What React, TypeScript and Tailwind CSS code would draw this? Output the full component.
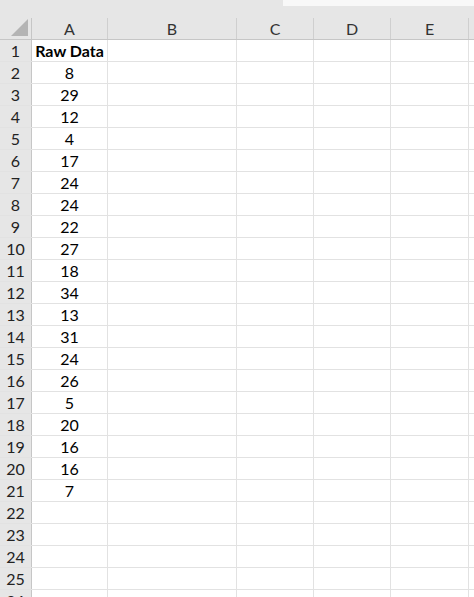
const cols = [
  { name: 'A', w: 'w-[76px]' },
  { name: 'B', w: 'w-[129px]' },
  { name: 'C', w: 'w-[77px]' },
  { name: 'D', w: 'w-[77px]' },
  { name: 'E', w: 'w-[78px]' },
];

const rawData = [8, 29, 12, 4, 17, 24, 24, 22, 27, 18, 34, 13, 31, 24, 26, 5, 20, 16, 16, 7];

function HeaderRow() {
  return (
    <div className="flex h-[22px] border-b border-[#c6c6c6] bg-[#e6e6e6]">
      <div className="relative w-[32px] shrink-0 border-r border-[#c6c6c6]">
        <svg className="absolute right-[3px] bottom-[3px]" width="17" height="17" viewBox="0 0 17 17">
          <polygon points="17,0 17,17 0,17" fill="#b4b4b4" />
        </svg>
      </div>
      {cols.map((c) => (
        <div
          key={c.name}
          className={`${c.w} shrink-0 border-r border-[#cfcfcf] flex items-center justify-center text-[16px] text-[#333]`}
        >
          {c.name}
        </div>
      ))}
      <div className="flex-1" />
    </div>
  );
}

function Row({ n, value, bold }: { n: number; value?: string; bold?: boolean }) {
  return (
    <div className="flex h-[22px] shrink-0 border-b border-[#e2e2e2]">
      <div className="w-[32px] shrink-0 border-r border-[#c6c6c6] bg-[#e6e6e6] flex items-center justify-center text-[16px] text-[#222]">
        {n}
      </div>
      {cols.map((c, i) => (
        <div
          key={c.name}
          className={`${c.w} shrink-0 border-r border-[#e2e2e2] flex items-center justify-center text-[16px] text-black ${
            bold && i === 0 ? 'font-bold' : ''
          }`}
        >
          {i === 0 ? value : ''}
        </div>
      ))}
      <div className="flex-1" />
    </div>
  );
}

export default function App() {
  const rows = Array.from({ length: 26 }, (_, i) => i + 1);
  return (
    <div className="w-[474px] h-[597px] overflow-hidden bg-white" style={{ fontFamily: 'Lato, "Liberation Sans", sans-serif' }}>
      <div className="flex h-[18px] bg-[#e6e6e6]">
        <div className="w-[283px]" />
        <div className="flex-1 h-[6px] bg-[#f8f8f8]" />
      </div>
      <HeaderRow />
      {rows.map((n) => (
        <Row
          key={n}
          n={n}
          value={n === 1 ? 'Raw Data' : rawData[n - 2] !== undefined ? String(rawData[n - 2]) : ''}
          bold={n === 1}
        />
      ))}
    </div>
  );
}
